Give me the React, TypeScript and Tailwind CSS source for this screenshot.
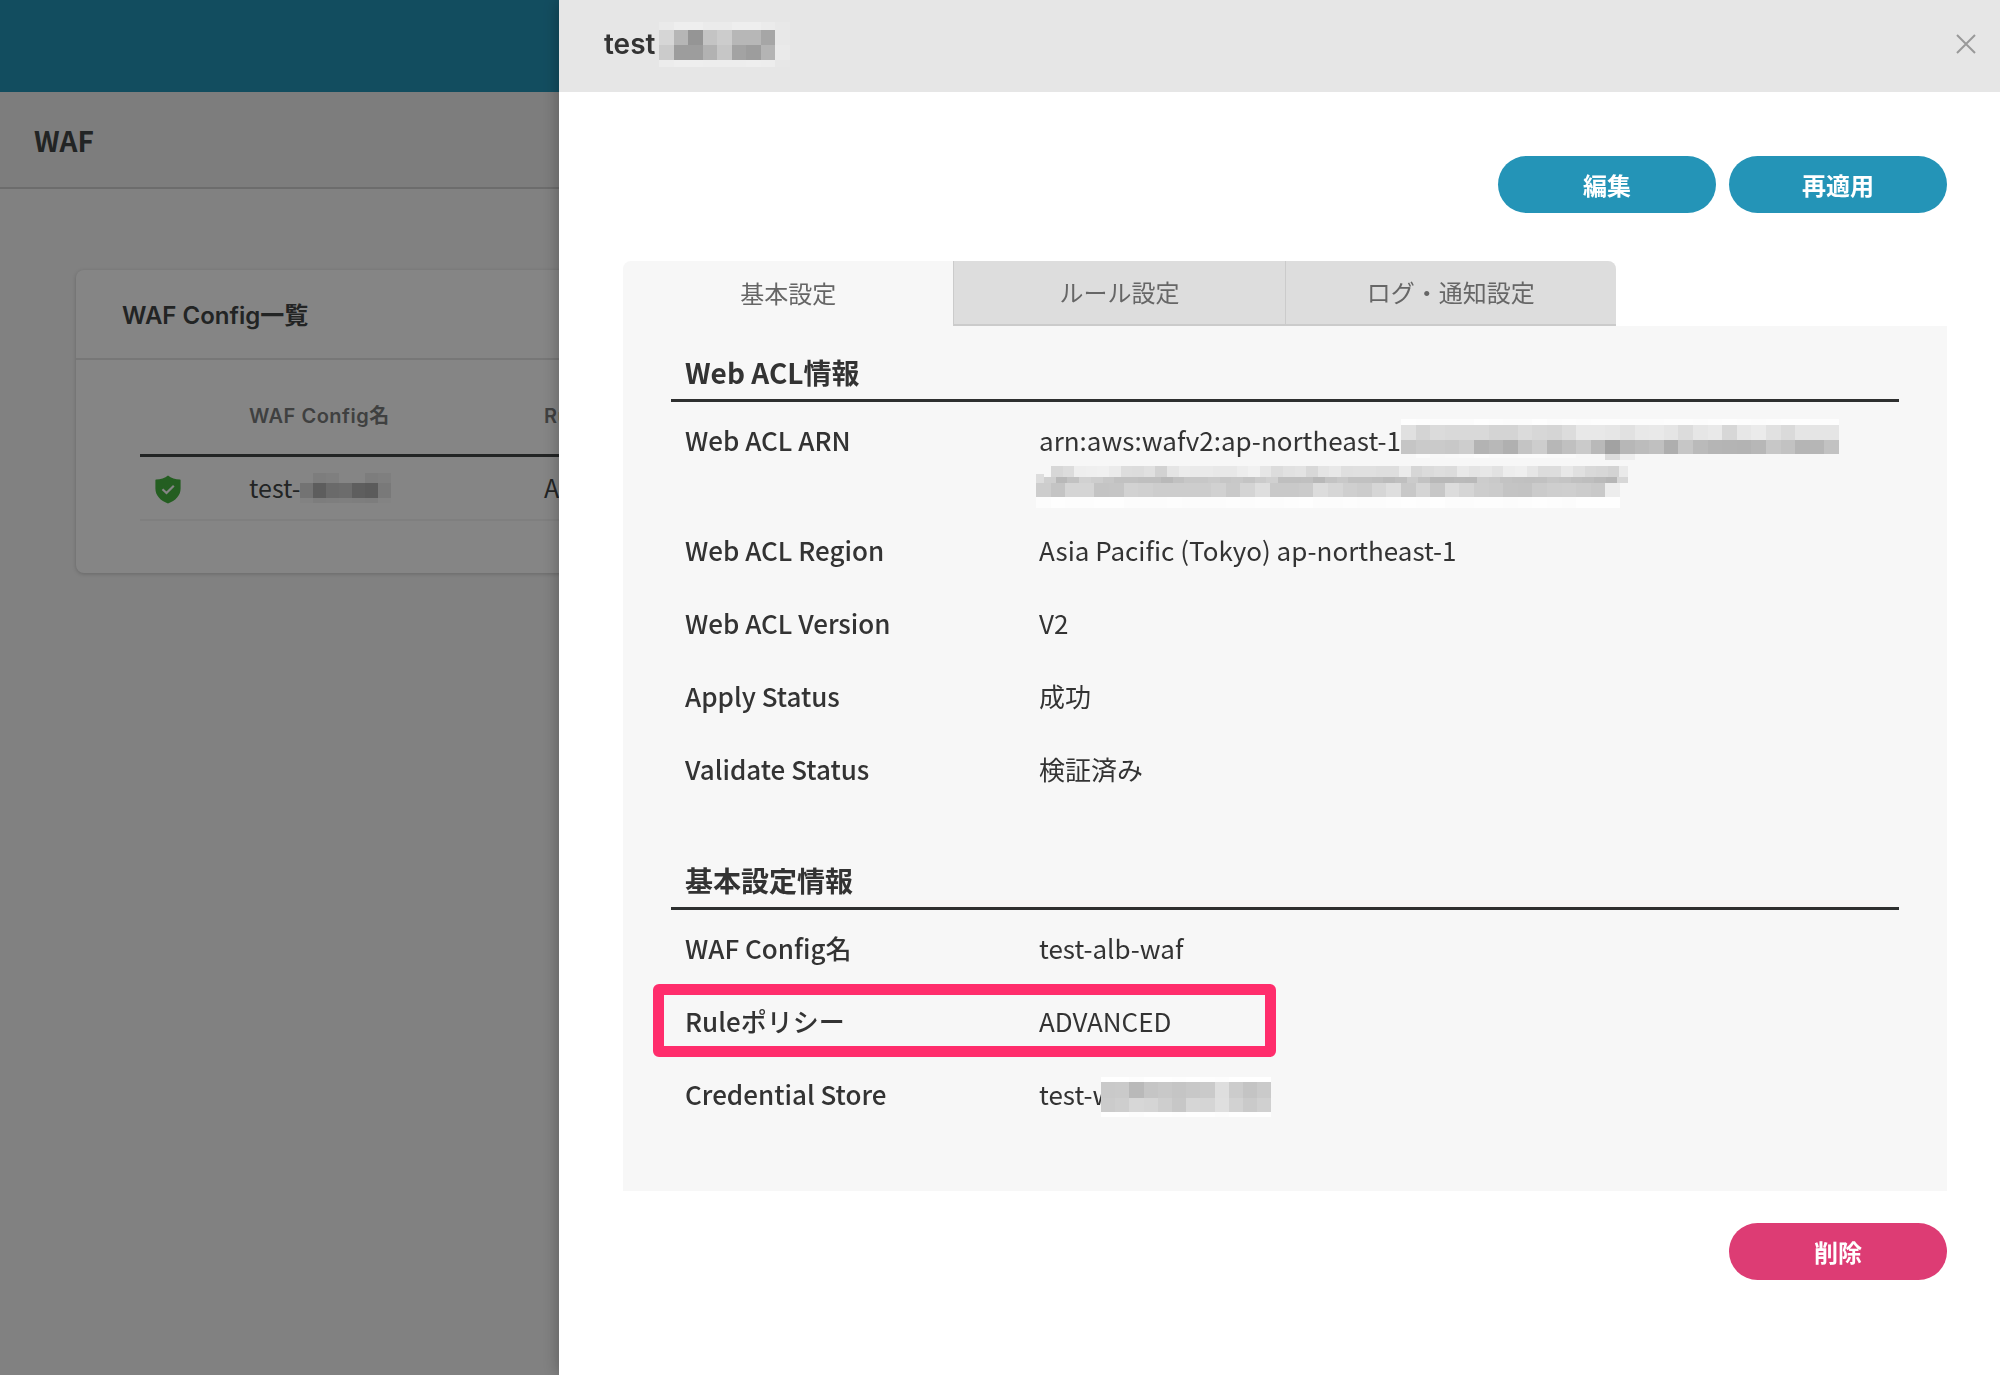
import { useState } from "react";

interface MosaicRow {
  x: number;
  y: number;
  cell: number;
  height: number;
  // two hex digits of grey per cell
  greys: string;
}

interface MosaicProps {
  width: number;
  height: number;
  rows: MosaicRow[];
  className?: string;
}

const titleMosaic: MosaicRow[] = [
  { x: 0, y: 0, cell: 14.5, height: 8, greys: "eaeeeeebebeeeeebe8" },
  { x: 0, y: 8, cell: 14.5, height: 15, greys: "d6b695c4ccb7b7a6e8" },
  { x: 0, y: 23, cell: 14.5, height: 15, greys: "cb9d9db2c6a39db4ea" },
  { x: 0, y: 38, cell: 14.5, height: 7, greys: "eceeeeedededeeede7" },
];

const configMosaic: MosaicRow[] = [
  { x: 0, y: 0, cell: 13, height: 10, greys: "fff0f4ffffeff4" },
  { x: 0, y: 10, cell: 13, height: 15, greys: "dcb2ccd0b4afe9" },
  { x: 0, y: 25, cell: 13, height: 5, greys: "faf0f2f4f2f0fc" },
];

const arnFirstMosaic: MosaicRow[] = [
  { x: 0, y: 0, cell: 14.6, height: 6, greys: "fefdfcfcfcfefdfcfcfefcfdfcfdfdfcfcfcfdfdfcfdfefdfcfdfefefdfd" },
  { x: 0, y: 6, cell: 14.6, height: 15, greys: "e0d4dbd9d9d9d4d4dbd7d5dce8e8e6e1e8e9e5dce6e9d7e7ebe1dae5e5e5" },
  { x: 0, y: 21, cell: 14.6, height: 14, greys: "c5cacac8cdb3b8b0c4cdb7c0cab9a2b7bcc0aec6bab5b4b3b7c7c2b5b6c2" },
  { x: 204.4, y: 35, cell: 14.6, height: 6, greys: "dcee" },
  { x: 14.6, y: 35, cell: 14.6, height: 4, greys: "fbf8f9fafcfafafbfbfafa" },
];

const arnSecondMosaic: MosaicRow[] = [
  { x: 0, y: 8, cell: 8, height: 9, greys: "dd" },
  { x: 15, y: 0, cell: 11.6, height: 11, greys: "d7dceeeff0ebdddce0d2e5eceaeae8e8edf1e6dce1e3d8e4e8dfe0e0dedeebd6dbdedce9e4e7e2edefe6dcdde8e0d9d7d3ea" },
  { x: 8, y: 11, cell: 11.7, height: 6, greys: "cfb8c2d1cdc7c1c1bfbfb9c1c7c7cac6c8c4cbd0bfbfc0b8c3c8c1c1bfbbbfcbc2b8b8bab9ccc9c3c1c0c1c6c4c0bebab6d7" },
  { x: 0, y: 17, cell: 14.6, height: 14, greys: "cdc4d5d5c4c5d2d0cdcdcdcdd1c9d4dec9c9cbdcd6cfccd6dec8d5c7dcd5cdcbc4c3cbcecfccc9ed" },
  { x: 0, y: 31, cell: 14.6, height: 11, greys: "fcfefdfdfefefcfcfcfdfcfcfcfdfcfdfcfdfefcfcfdfcfcfdfefdfefcfcfdfdfcfdfefdfcfefefe" },
];

const storeMosaic: MosaicRow[] = [
  { x: 0, y: 0, cell: 14.2, height: 5, greys: "fffffdfffffefffefdffffff" },
  { x: 0, y: 5, cell: 14.2, height: 16, greys: "c9cab9c5c8c5c8cadeccc4ca" },
  { x: 0, y: 21, cell: 14.2, height: 14, greys: "cbced7d5cec7d6d5dfd2cad0" },
  { x: 0, y: 35, cell: 14.2, height: 5, greys: "fefefcfefefdfefefcfefefe" },
];

function Mosaic({ width, height, rows, className }: MosaicProps) {
  return (
    <svg width={width} height={height} className={className} shapeRendering="crispEdges" aria-hidden="true">
      {rows.map((row, i) =>
        (row.greys.match(/../g) ?? []).map((grey, j) => (
          <rect
            key={`${i}-${j}`}
            x={row.x + j * row.cell}
            y={row.y}
            width={row.cell}
            height={row.height}
            fill={`#${grey}${grey}${grey}`}
          />
        ))
      )}
    </svg>
  );
}

function ShieldCheck() {
  return (
    <svg width="26" height="29" viewBox="0 0 26 29" role="img" aria-label="OK">
      <path
        d="M13 0.5C16 3 20.5 4.4 25 4.4Q25.6 4.4 25.6 5.2V13.5C25.6 20.5 20.5 25.8 13 28.5C5.5 25.8 0.4 20.5 0.4 13.5V5.2Q0.4 4.4 1 4.4C5.5 4.4 10 3 13 0.5Z"
        fill="#46b440"
      />
      <path d="M7.5 14.2L11.5 18L18.8 10.8" fill="none" stroke="#fff" strokeWidth="2.2" />
    </svg>
  );
}

function WafPage() {
  return (
    <div className="min-h-screen bg-[#f7f7f7] text-[#424545]">
      <header className="h-[92px] bg-[#2494b7]" />
      <div className="flex h-[97px] items-center border-b-2 border-[#d0d0d0] bg-[#efefef] px-[34px]">
        <h1 className="text-[28px] leading-10 font-bold">WAF</h1>
      </div>
      <main className="px-[76px] pt-[81px]">
        <section className="rounded-lg bg-white pb-[52px] shadow-[0_1px_4px_rgba(0,0,0,0.2)]">
          <h2 className="border-b-2 border-[#e4e4e4] px-[46px] pt-7 pb-6 font-[Inter,'Noto_Sans_CJK_JP',sans-serif] text-2xl leading-9 font-semibold">
            WAF Config一覧
          </h2>
          <div className="px-16 pt-[30px]">
            <table className="w-full table-fixed border-collapse text-left">
              <thead>
                <tr className="h-[65px] border-b-[3px] border-[#424545] font-[Inter,'Noto_Sans_CJK_JP',sans-serif] text-xl tracking-wide text-[#7a7b7b]">
                  <th className="w-[109px]" />
                  <th className="w-[295px] pb-3 font-semibold">WAF Config名</th>
                  <th className="pb-3 font-semibold">Ruleポリシー</th>
                </tr>
              </thead>
              <tbody>
                <tr className="h-[65px] border-b-2 border-[#f4f4f4] text-[25px] leading-9">
                  <td className="pt-1 pl-[15px]">
                    <ShieldCheck />
                  </td>
                  <td className="pb-0.5">
                    <span className="relative inline-block">
                      test-
                      <Mosaic width={91} height={30} rows={configMosaic} className="absolute top-1 left-full" />
                    </span>
                  </td>
                  <td className="pb-0.5">ADVANCED</td>
                </tr>
              </tbody>
            </table>
          </div>
        </section>
      </main>
    </div>
  );
}

const tabs = ["基本設定", "ルール設定", "ログ・通知設定"];

function TabBar() {
  const [active, setActive] = useState(0);

  return (
    <div role="tablist" className="flex h-[65px] w-3/4 overflow-hidden rounded-t-lg bg-[#f7f7f7]">
      {tabs.map((tab, i) => (
        <button
          key={tab}
          role="tab"
          aria-selected={i === active}
          onClick={() => setActive(i)}
          className={
            i === active
              ? "flex-1 pb-0.5 text-2xl text-[#666]"
              : "flex-1 border-b-2 border-l border-[#cbcbcb] bg-[#ddd] pb-0.5 text-2xl text-[#666]"
          }
        >
          {tab}
        </button>
      ))}
    </div>
  );
}

interface RowProps {
  label: string;
  children: React.ReactNode;
  highlighted?: boolean;
}

function Row({ label, children, highlighted }: RowProps) {
  return (
    <div className="relative flex py-[18px] pl-[14px] text-[26px] leading-[37px]">
      <dt className="w-[354px] shrink-0 font-medium">{label}</dt>
      <dd className="flex-1">{children}</dd>
      {highlighted && (
        <div className="absolute inset-y-0 -left-[18px] w-[623px] rounded-md border-[11px] border-[#ff2d6c]" />
      )}
    </div>
  );
}

function SectionTitle({ children }: { children: React.ReactNode }) {
  return (
    <h3 className="mb-px border-b-[3px] border-[#2e3030] pb-[7px] pl-[14px] text-[28px] leading-10 font-bold">
      {children}
    </h3>
  );
}

function Drawer() {
  return (
    <aside className="w-[calc(72%+1px)] bg-white text-[#333] shadow-[0_0_16px_rgba(0,0,0,0.3)]">
      <div className="flex h-[92px] items-center justify-between bg-[#e6e6e6] pr-6 pb-1 pl-[45px]">
        <h2 className="relative font-[Inter,'Noto_Sans_CJK_JP',sans-serif] text-[28px] leading-9 font-semibold">
          test
          <Mosaic width={131} height={45} rows={titleMosaic} className="absolute -top-1 left-full ml-1" />
        </h2>
        <button aria-label="閉じる" className="text-[#999]">
          <svg width="20" height="20" viewBox="0 0 20 20" stroke="currentColor" strokeWidth="2">
            <path d="M1 1L19 19M19 1L1 19" />
          </svg>
        </button>
      </div>

      <div className="pt-16 pr-[53px] pl-16">
        <div className="flex justify-end gap-[13px]">
          <button className="h-[57px] w-[218px] rounded-full bg-[#2494b7] text-2xl font-bold text-white">編集</button>
          <button className="h-[57px] w-[218px] rounded-full bg-[#2494b7] text-2xl font-bold text-white">再適用</button>
        </div>

        <div className="mt-12">
          <TabBar />
          <div className="bg-[#f7f7f7] px-12 pt-[26px] pb-[61px]">
            <section>
              <SectionTitle>Web ACL情報</SectionTitle>
              <dl>
                <Row label="Web ACL ARN">
                  <span className="relative inline-block">
                    arn:aws:wafv2:ap-northeast-1
                    <Mosaic width={438} height={41} rows={arnFirstMosaic} className="absolute -top-0.5 left-full" />
                  </span>
                  <div className="relative h-[37px]">
                    <Mosaic width={592} height={42} rows={arnSecondMosaic} className="absolute top-2 -left-[3px]" />
                  </div>
                </Row>
                <Row label="Web ACL Region">Asia Pacific (Tokyo) ap-northeast-1</Row>
                <Row label="Web ACL Version">V2</Row>
                <Row label="Apply Status">成功</Row>
                <Row label="Validate Status">検証済み</Row>
              </dl>
            </section>

            <section className="mt-[55px]">
              <SectionTitle>基本設定情報</SectionTitle>
              <dl>
                <Row label="WAF Config名">test-alb-waf</Row>
                <Row label="Ruleポリシー" highlighted>ADVANCED</Row>
                <Row label="Credential Store">
                  <span className="relative inline-block">
                    test-w
                    <Mosaic width={170} height={40} rows={storeMosaic} className="absolute top-0.5 left-full -ml-3" />
                  </span>
                </Row>
              </dl>
            </section>
          </div>
        </div>

        <div className="mt-8 flex justify-end">
          <button className="h-[57px] w-[218px] rounded-full bg-[#dd3c74] text-2xl font-bold text-white">削除</button>
        </div>
      </div>
    </aside>
  );
}

export default function App() {
  return (
    <div lang="ja" className="font-['Noto_Sans_CJK_JP',sans-serif]">
      <WafPage />
      {/* Backdrop */}
      <div className="fixed inset-0 flex justify-end bg-black/48">
        <Drawer />
      </div>
    </div>
  );
}
